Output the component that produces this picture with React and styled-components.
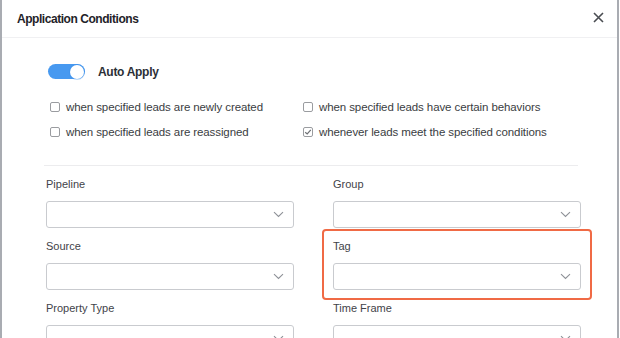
import React from "react";
import styled, { createGlobalStyle } from "styled-components";

const Global = createGlobalStyle`
  html, body { margin: 0; padding: 0; background: #ffffff; }
  body { font-family: "Liberation Sans", Arial, sans-serif; color: #333; }
  * { box-sizing: border-box; }
`;

const Modal = styled.div`
  width: 619px;
  height: 338px;
  overflow: hidden;
  background: #fff;
  border-left: 2px solid #a9acb2;
  border-right: 2px solid #a9acb2;
`;

const Header = styled.div`
  height: 38px;
  display: flex;
  align-items: center;
  justify-content: space-between;
  padding: 0 12px 0 15px;
  border-bottom: 1px solid #f0f0f2;
`;

const Title = styled.h2`
  margin: 0;
  font-size: 12px;
  font-weight: 700;
  letter-spacing: -0.45px;
  color: #1f2329;
`;

const Close = styled.button`
  border: 0;
  background: none;
  padding: 0;
  width: 14px;
  height: 14px;
  display: flex;
  align-items: center;
  justify-content: center;
  margin-top: -3px;
`;

const Body = styled.div`
  padding: 26px 40px 0 40px;
`;

const ToggleRow = styled.div`
  display: flex;
  align-items: center;
  gap: 13px;
  padding-left: 6px;
  height: 15px;
`;

const Switch = styled.div`
  width: 37px;
  height: 15px;
  border-radius: 8px;
  background: ${(p) => (p.on ? "#4799f0" : "#ccc")};
  display: flex;
  align-items: center;
  justify-content: ${(p) => (p.on ? "flex-end" : "flex-start")};
  padding: 0 1px;
`;

const Knob = styled.div`
  width: 14px;
  height: 14px;
  border-radius: 50%;
  background: #fff;
  box-shadow: 0 0 0 1px rgba(60, 140, 230, 0.35);
`;

const SwitchLabel = styled.span`
  font-size: 12px;
  font-weight: 700;
  letter-spacing: -0.3px;
  color: #2b2f36;
`;

const Checks = styled.div`
  display: grid;
  grid-template-columns: 253px 1fr;
  grid-auto-rows: 25px;
  margin-top: 15px;
  padding-left: 8px;
`;

const CheckItem = styled.label`
  display: flex;
  align-items: center;
  gap: 6px;
  font-size: 11.5px;
  color: #3a3d42;
  letter-spacing: -0.1px;
`;

const Box = styled.span`
  width: 10px;
  height: 10px;
  border: 1px solid #9a9ca0;
  border-radius: 2px;
  background: #fff;
  display: flex;
  align-items: center;
  justify-content: center;
  flex: none;
`;

const Divider = styled.div`
  height: 1px;
  background: #ececee;
  margin: 21px 0 0 2px;
  width: 534px;
`;

const FormGrid = styled.div`
  display: grid;
  grid-template-columns: 248px 248px;
  column-gap: 39px;
  row-gap: 11px;
  padding: 11px 0 0 4px;
`;

const Field = styled.div`
  position: relative;
  display: flex;
  flex-direction: column;
  gap: 10px;
  &::after {
    content: "";
    display: ${(p) => (p.highlight ? "block" : "none")};
    position: absolute;
    left: -11px;
    right: -11px;
    top: -10px;
    bottom: -10px;
    border: 2px solid #f06a45;
    border-radius: 4px;
    pointer-events: none;
  }
`;

const Label = styled.span`
  font-size: 11px;
  line-height: 14px;
  color: #3f4349;
`;

const Select = styled.div`
  height: 27px;
  border: 1px solid #c9cbcf;
  border-radius: 3px;
  background: #fff;
  display: flex;
  align-items: center;
  justify-content: flex-end;
  padding-right: 9px;
`;

const Chevron = () => (
  <svg width="11" height="7" viewBox="0 0 11 7" fill="none">
    <path d="M1 1.2 L5.5 5.5 L10 1.2" stroke="#8e9197" strokeWidth="1.1" />
  </svg>
);

const CheckBox = ({ checked }) => (
  <Box>
    {checked && (
      <svg width="8" height="8" viewBox="0 0 8 8" fill="none">
        <path d="M1.2 4.2 L3.2 6 L6.8 1.8" stroke="#6d7075" strokeWidth="1.2" />
      </svg>
    )}
  </Box>
);

const checks = [
  ["when specified leads are newly created", false],
  ["when specified leads have certain behaviors", false],
  ["when specified leads are reassigned", false],
  ["whenever leads meet the specified conditions", true],
];

const fields = ["Pipeline", "Group", "Source", "Tag", "Property Type", "Time Frame"];

export default function App() {
  return (
    <>
      <Global />
      <Modal>
        <Header>
          <Title>Application Conditions</Title>
          <Close aria-label="close">
            <svg width="11" height="11" viewBox="0 0 11 11">
              <path d="M1 1 L10 10 M10 1 L1 10" stroke="#4a4d52" strokeWidth="1.6" />
            </svg>
          </Close>
        </Header>
        <Body>
          <ToggleRow>
            <Switch on>
              <Knob />
            </Switch>
            <SwitchLabel>Auto Apply</SwitchLabel>
          </ToggleRow>
          <Checks>
            {checks.map(([t, c]) => (
              <CheckItem key={t}>
                <CheckBox checked={c} />
                {t}
              </CheckItem>
            ))}
          </Checks>
          <Divider />
          <FormGrid>
            {fields.map((f) => (
              <Field key={f} highlight={f === "Tag"}>
                <Label>{f}</Label>
                <Select>
                  <Chevron />
                </Select>
              </Field>
            ))}
          </FormGrid>
        </Body>
      </Modal>
    </>
  );
}
